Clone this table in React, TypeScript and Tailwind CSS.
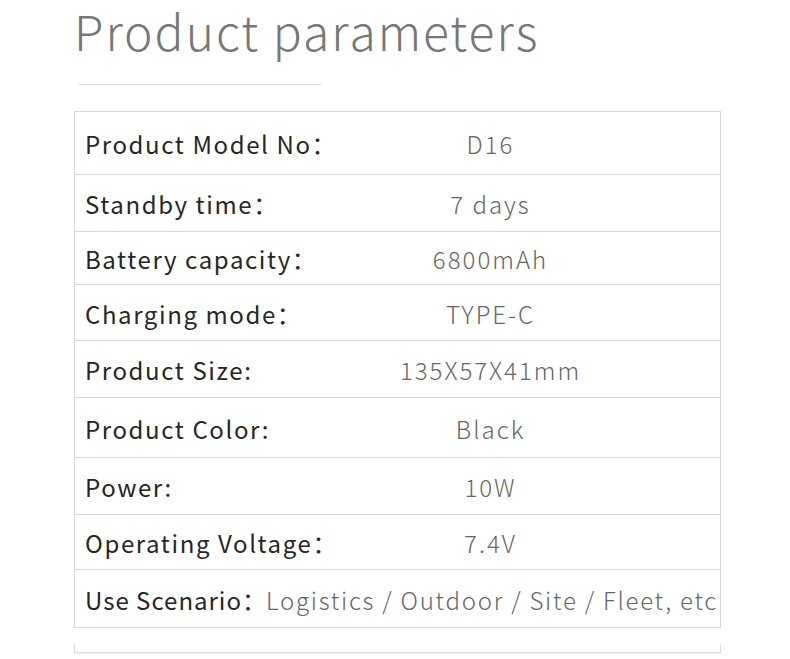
import React from "react";

const rows: { label: string; value: string; h: string }[] = [
  { label: "Product Model No：", value: "D16", h: "h-[63px]" },
  { label: "Standby time：", value: "7 days", h: "h-[57px]" },
  { label: "Battery capacity：", value: "6800mAh", h: "h-[53px]" },
  { label: "Charging mode：", value: "TYPE-C", h: "h-[56px]" },
  { label: "Product Size:", value: "135X57X41mm", h: "h-[57px]" },
  { label: "Product Color:", value: "Black", h: "h-[60px]" },
  { label: "Power:", value: "10W", h: "h-[57px]" },
  { label: "Operating Voltage：", value: "7.4V", h: "h-[55px]" },
];

export default function App() {
  return (
    <div
      className="w-[790px] h-[659px] overflow-hidden bg-white"
      style={{ fontFamily: '"Noto Sans CJK SC", "Noto Sans", sans-serif' }}
    >
      <div className="pl-[74px] w-[721px]">
        <h1 className="text-[48px] leading-[60px] font-light tracking-[2px] text-[#777]">
          Product parameters
        </h1>
        <div className="ml-[5px] mt-[24px] w-[242px] h-px bg-[#d4d4d4]" />
        <div className="mt-[26px] border border-[#d6d6d6] border-b-0">
          {rows.map((r) => (
            <div
              key={r.label}
              className={`${r.h} grid grid-cols-[186px_1fr] items-center border-b border-[#d6d6d6] pt-[2px]`}
            >
              <div className="pl-[10px] whitespace-nowrap text-[24px] font-normal tracking-[1.6px] text-[#262626]">
                {r.label}
              </div>
              <div className="text-center text-[24px] font-light tracking-[2px] text-[#666]">
                {r.value}
              </div>
            </div>
          ))}
          <div className="h-[58px] flex items-center border-b border-[#d6d6d6] pl-[10px] pt-[2px] whitespace-nowrap text-[24px]">
            <span className="font-normal tracking-[1px] text-[#262626]">Use Scenario：</span>
            <span className="-ml-[1px] font-light tracking-[1.75px] text-[#666]">Logistics / Outdoor / Site / Fleet, etc</span>
          </div>
        </div>
        <div className="mt-[16px] h-[9px] border-x border-b border-[#dcdcdc] shadow-[0_1px_1px_rgba(0,0,0,0.06)]" />
      </div>
    </div>
  );
}
